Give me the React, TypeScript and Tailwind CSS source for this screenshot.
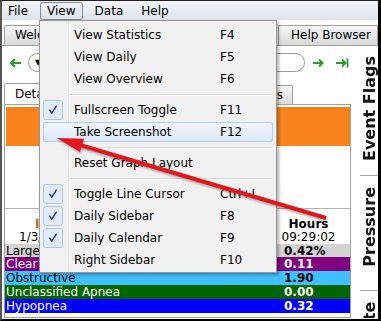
import React from 'react'

type MenuEntry = { label?: string; keys?: string; checked?: boolean; active?: boolean; sep?: boolean }

const viewMenu: MenuEntry[] = [
  { label: 'View Statistics', keys: 'F4' },
  { label: 'View Daily', keys: 'F5' },
  { label: 'View Overview', keys: 'F6' },
  { sep: true },
  { label: 'Fullscreen Toggle', keys: 'F11', checked: true },
  { label: 'Take Screenshot', keys: 'F12', active: true },
  { sep: true },
  { label: 'Reset Graph Layout' },
  { sep: true },
  { label: 'Toggle Line Cursor', keys: 'Ctrl+L', checked: true },
  { label: 'Daily Sidebar', keys: 'F8', checked: true },
  { label: 'Daily Calendar', keys: 'F9', checked: true },
  { label: 'Right Sidebar', keys: 'F10' },
]

const eventRows = [
  { label: 'Large Leak', value: '0.42%', row: 'bg-[#d3d3d3] text-black h-[13px]' },
  { label: 'Clear Airway', value: '0.11', row: 'bg-[#800080] text-white h-[14px]' },
  { label: 'Obstructive', value: '1.90', row: 'bg-[#40c0ff] text-black h-[14px]' },
  { label: 'Unclassified Apnea', value: '0.00', row: 'bg-[#006400] text-[#fffff0] h-[14px]' },
  { label: 'Hypopnea', value: '0.32', row: 'bg-[#0000ff] text-white h-[14px]' },
]

function Tick() {
  return (
    <svg width="20" height="20" viewBox="0 0 20 20">
      <path d="M6.3 10.2 L8.7 13.6 L13.6 5.8" fill="none" stroke="#1d2f9a" strokeWidth="1.6" strokeLinecap="round" strokeLinejoin="round" />
    </svg>
  )
}

function GreenArrow({ dir }: { dir: 'left' | 'right' | 'end' }) {
  if (dir === 'left') {
    return (
      <svg width="12" height="10" viewBox="0 0 12 10">
        <path d="M1 5 H11" stroke="#2e9a2e" strokeWidth="2.2" />
        <path d="M5 1 L1 5 L5 9" fill="none" stroke="#2e9a2e" strokeWidth="2" />
      </svg>
    )
  }
  return (
    <svg width={dir === 'end' ? 14 : 12} height="10" viewBox={dir === 'end' ? '0 0 14 10' : '0 0 12 10'}>
      <path d="M1 5 H10" stroke="#2e9a2e" strokeWidth="2" />
      <path d="M7 1.5 L10.5 5 L7 8.5" fill="none" stroke="#2e9a2e" strokeWidth="2" />
      {dir === 'end' && <path d="M12.5 0.5 V9.5" stroke="#2e9a2e" strokeWidth="1.8" />}
    </svg>
  )
}

export default function App() {
  return (
    <div className="relative w-[381px] h-[321px] overflow-hidden bg-white border-t border-t-[#222] border-l-2 border-l-[#555] border-r-[3px] border-r-black border-b-2 border-b-black font-['DejaVu_Sans',sans-serif] text-[12px] text-black">
      {/* menu bar */}
      <div className="flex h-[19px] gap-[6px] bg-gradient-to-b from-[#f3f5f9] to-[#dde3ec]">
        {['File', 'View', 'Data', 'Help'].map((m) => (
          <div
            key={m}
            className={
              m === 'View'
                ? 'mt-[1px] h-[18px] px-[6px] border border-[#7f8c9c] rounded-[3px] bg-gradient-to-b from-[#eef1f6] to-[#dde3eb] leading-[16px]'
                : 'mt-[1px] h-[18px] px-[5px] border border-transparent leading-[16px]'
            }
          >
            {m}
          </div>
        ))}
      </div>

      {/* main tabs */}
      <div className="flex h-[26px] items-end gap-[1px] pl-[2px] border-b border-[#a0a0a0]">
        <div className="h-[20px] w-[79px] pl-[10px] leading-[19px] border border-b-0 border-[#a0a0a0] rounded-t-[2px] bg-gradient-to-b from-[#f6f6f6] to-[#d9d9d9]">Welcome</div>
        <div className="h-[20px] w-[62px] pl-[10px] leading-[19px] border border-b-0 border-[#a0a0a0] rounded-t-[2px] bg-gradient-to-b from-[#f6f6f6] to-[#d9d9d9]">Daily</div>
        <div className="h-[20px] w-[78px] pl-[10px] leading-[19px] border border-b-0 border-[#a0a0a0] rounded-t-[2px] bg-gradient-to-b from-[#f6f6f6] to-[#d9d9d9]">Statistics</div>
        <div className="flex h-[20px] w-[83px] justify-end pr-[10px] leading-[19px] border border-b-0 border-[#a0a0a0] rounded-t-[2px] bg-gradient-to-b from-[#f6f6f6] to-[#d9d9d9]">Overview</div>
        <div className="h-[20px] w-[100px] shrink-0 pl-[12px] whitespace-nowrap leading-[19px] border border-b-0 border-[#a0a0a0] rounded-t-[2px] bg-gradient-to-b from-[#f6f6f6] to-[#d9d9d9]">Help Browser</div>
      </div>

      <div className="flex h-[272px]">
        {/* left sidebar */}
        <div className="w-[349px] shrink-0">
          <div className="flex h-[34px] items-start pt-[7px]">
            <div className="flex h-[19px] w-[26px] items-center pl-[8px]">
              <GreenArrow dir="left" />
            </div>
            <div className="flex h-[19px] w-[277px] items-center rounded-full border border-[#9a9a9a] bg-white pl-[6px]">
              <span className="text-[8px] leading-none">▼</span>
              <span className="ml-[8px]">Sun Jan 3 2021</span>
            </div>
            <div className="flex h-[19px] items-center ml-[7px]">
              <GreenArrow dir="right" />
            </div>
            <div className="flex h-[19px] items-center ml-[11px]">
              <GreenArrow dir="end" />
            </div>
          </div>

          <div className="flex h-[24px] items-end pl-[2px]">
            <div className="h-[21px] w-[68px] pl-[10px] leading-[20px] border border-b-0 border-[#a0a0a0] rounded-t-[2px] bg-white">Details</div>
            <div className="h-[19px] w-[64px] pl-[10px] leading-[18px] border border-b-0 border-l-0 border-[#a0a0a0] bg-gradient-to-b from-[#f4f4f4] to-[#dedede]">Events</div>
            <div className="h-[19px] w-[64px] pl-[10px] leading-[18px] border border-b-0 border-l-0 border-[#a0a0a0] bg-gradient-to-b from-[#f4f4f4] to-[#dedede]">Notes</div>
            <div className="flex h-[19px] w-[93px] justify-end pr-[9px] leading-[18px] border border-b-0 border-l-0 border-[#a0a0a0] rounded-tr-[2px] bg-gradient-to-b from-[#f4f4f4] to-[#dedede]">Bookmarks</div>
          </div>

          <div className="ml-[2px] h-[214px] w-[347px] border border-[#a0a0a0] bg-white">
            <div className="ml-[1px] mt-[2px] h-[39px] bg-[#f8821c]" />
            <div className="h-[62px]" />
            <div className="border-t border-[#b4b4b4] pt-[8px]">
              <div className="flex h-[14px] leading-[14px]">
                <div className="flex-1 pl-[30px] font-bold text-[#c8601c]">Information</div>
                <div className="w-[83px] text-center font-bold">Hours</div>
              </div>
              <div className="flex h-[13px] leading-[13px]">
                <div className="flex-1 pl-[14px]">1/3/2021</div>
                <div className="w-[83px] text-center">09:29:02</div>
              </div>
              {eventRows.map((r) => (
                <div key={r.label} className={`flex leading-[14px] ${r.row}`}>
                  <div className="flex-1 pl-[1px] whitespace-nowrap">{r.label}</div>
                  <div className="w-[83px] pl-[17px] font-bold">{r.value}</div>
                </div>
              ))}
            </div>
          </div>
        </div>

        {/* graph titles */}
        <div className="flex-1 flex flex-col overflow-hidden text-[16px] font-bold text-[#111]">
          <div className="flex h-[129px] shrink-0 items-center justify-center pl-[10px] pb-[3px]">
            <span className="[writing-mode:vertical-rl] rotate-180 leading-none whitespace-nowrap">Event Flags</span>
          </div>
          <div className="ml-[9px] h-px shrink-0 bg-[#a8a8a8]" />
          <div className="flex h-[114px] shrink-0 items-center justify-center pl-[10px] pb-[12px]">
            <span className="[writing-mode:vertical-rl] rotate-180 leading-none whitespace-nowrap">Pressure</span>
          </div>
          <div className="ml-[9px] h-px shrink-0 bg-[#a8a8a8]" />
          <div className="flex h-[100px] shrink-0 justify-center pt-[8px] pl-[10px]">
            <span className="[writing-mode:vertical-rl] rotate-180 leading-none whitespace-nowrap">Flow Rate</span>
          </div>
        </div>
      </div>

      {/* View dropdown */}
      <div className="absolute left-[37px] top-[19px] w-[238px] h-[253px] border border-[#979797] bg-[#f1f1f1] pt-[3px] shadow-[2px_2px_3px_rgba(0,0,0,0.3)]">
        <div className="absolute left-[28px] top-0 bottom-0 w-[2px] border-l border-l-[#e0e0e0] border-r border-r-white" />
        {viewMenu.map((item, i) =>
          item.sep ? (
            <div key={i} className="relative flex h-[9px] items-center pl-[30px] pr-[4px]">
              <div className="h-[2px] w-full border-t border-t-[#d7d7d7] border-b border-b-white" />
            </div>
          ) : (
            <div key={i} className="relative h-[22px] pt-[1px]">
              <div
                className={
                  item.active
                    ? 'ml-[3px] flex h-[20px] w-[230px] items-center rounded-[3px] bg-gradient-to-b from-[#f1f6fc] to-[#dce8f6] shadow-[inset_0_0_0_1px_#aecdf2]'
                    : 'ml-[3px] flex h-[20px] w-[230px] items-center rounded-[3px]'
                }
              >
                <div className="h-[20px] w-[20px] shrink-0">
                  {item.checked && (
                    <div className="h-[20px] w-[20px] rounded-[3px] border border-[#aac8ec] bg-[#e2ecf8] flex items-center justify-center">
                      <Tick />
                    </div>
                  )}
                </div>
                <div className="ml-[11px] w-[146px] whitespace-nowrap">{item.label}</div>
                <div className="whitespace-nowrap">{item.keys}</div>
              </div>
            </div>
          ),
        )}
      </div>

      {/* annotation arrow */}
      <svg
        className="absolute left-[-2px] top-[-1px] pointer-events-none drop-shadow-[1px_2px_1px_rgba(0,0,0,0.3)]"
        width="381"
        height="321"
        viewBox="0 0 381 321"
      >
        <line x1="326" y1="218" x2="80" y2="145" stroke="#e4161c" strokeWidth="4" />
        <polygon points="57,138 84,138.7 79.9,152.1" fill="#e4161c" />
      </svg>
    </div>
  )
}
